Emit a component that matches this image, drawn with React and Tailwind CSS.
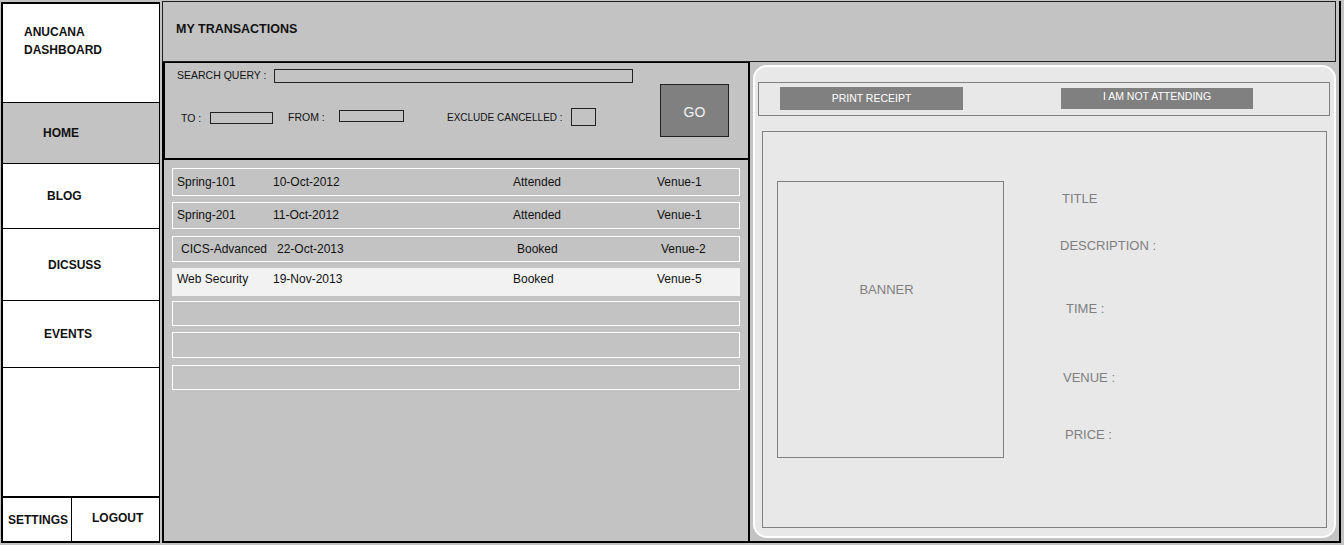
const rows = [
  { name: 'Spring-101', date: '10-Oct-2012', status: 'Attended', venue: 'Venue-1', box: 'mt-0 h-[28px] border border-white pl-[4px]' },
  { name: 'Spring-201', date: '11-Oct-2012', status: 'Attended', venue: 'Venue-1', box: 'mt-[6px] h-[27px] border border-white pl-[4px] pb-[2px]' },
  { name: 'CICS-Advanced', date: '22-Oct-2013', status: 'Booked', venue: 'Venue-2', box: 'mt-[7px] h-[26px] border border-white pl-[8px]' },
  { name: 'Web Security', date: '19-Nov-2013', status: 'Booked', venue: 'Venue-5', box: 'mt-[6px] h-[28px] bg-[#f2f2f2] pl-[5px] pb-[6px]' },
];

const emptyRows = ['mt-[5px] h-[25px]', 'mt-[6px] h-[26px]', 'mt-[7px] h-[25px]'];

function NavItem({ label, className }) {
  return (
    <div className={`flex items-center border-b border-black text-[12px] font-bold text-[#111] ${className}`}>
      {label}
    </div>
  );
}

function Sidebar() {
  return (
    <aside className="mt-[1px] flex w-[159px] flex-col border-l-2 border-t-2 border-r border-black bg-white">
      <div className="h-[99px] border-b border-black pl-[21px] pt-[19px] text-[12px] font-bold leading-[18px] text-[#111]">
        <div>ANUCANA</div>
        <div>DASHBOARD</div>
      </div>
      <NavItem label="HOME" className="h-[61px] bg-[#c3c3c3] pl-[40px]" />
      <NavItem label="BLOG" className="h-[65px] pl-[44px]" />
      <NavItem label="DICSUSS" className="h-[72px] pl-[45px]" />
      <NavItem label="EVENTS" className="h-[67px] pl-[41px]" />
      <div className="flex-1" />
      <div className="flex h-[47px] border-y-2 border-black text-[12px] font-bold text-[#111]">
        <div className="flex w-[69px] items-center border-r border-black pl-[5px] pt-[1px]">SETTINGS</div>
        <div className="flex flex-1 items-center pl-[20px] pb-[4px]">LOGOUT</div>
      </div>
    </aside>
  );
}

function SearchPanel() {
  return (
    <div className="flex h-[98px] border-t border-b-2 border-l border-black text-[10.5px] text-[#111]">
      <div className="flex flex-col pl-[12px] pt-[6px]">
        <div className="flex h-[14px] items-center">
          <span className="w-[97px]">SEARCH QUERY :</span>
          <div className="h-[14px] w-[359px] border border-[#222]" />
        </div>
        <div className="ml-[4px] mt-[25px] flex h-[18px] items-center">
          <span className="w-[29px] translate-y-[2px]">TO :</span>
          <div className="h-[12px] w-[63px] translate-y-[1px] border border-[#222]" />
          <span className="ml-[15px] w-[51px] translate-y-[1px]">FROM :</span>
          <div className="h-[12px] w-[65px] -translate-y-px border border-[#222]" />
          <span className="ml-[43px] w-[124px] text-[10px]">EXCLUDE CANCELLED :</span>
          <div className="h-[18px] w-[25px] border border-[#222]" />
        </div>
      </div>
      <div className="ml-auto mr-[19px] mt-[21px] flex h-[53px] w-[69px] items-center justify-center border border-[#222] bg-[#808080] pt-[3px] text-[14px] text-[#f2f2f2]">
        GO
      </div>
    </div>
  );
}

function TransactionList() {
  return (
    <div className="flex flex-col px-[8px] pt-[8px] text-[12px] text-[#111]">
      {rows.map((r) => (
        <div key={r.name} className={`flex items-center ${r.box}`}>
          <span className="w-[96px]">{r.name}</span>
          <span className="w-[240px]">{r.date}</span>
          <span className="w-[144px]">{r.status}</span>
          <span>{r.venue}</span>
        </div>
      ))}
      {emptyRows.map((c, i) => (
        <div key={i} className={`border border-white ${c}`} />
      ))}
    </div>
  );
}

function DetailPanel() {
  return (
    <div className="flex flex-1 flex-col rounded-[14px] border-2 border-white bg-[#e8e8e8]">
      <div className="ml-[3px] mr-[4px] mt-[15px] flex h-[34px] items-start border border-[#808080] text-[10.5px] text-white">
        <div className="ml-[21px] mt-[4px] flex h-[23px] w-[183px] items-center justify-center bg-[#808080]">
          PRINT RECEIPT
        </div>
        <div className="ml-[98px] mt-[5px] flex h-[21px] w-[192px] items-center justify-center bg-[#808080] pb-[3px]">
          I AM NOT ATTENDING
        </div>
      </div>
      <div className="mx-[7px] mb-[8px] mt-[15px] flex flex-1 items-start border border-[#808080] text-[13px] leading-[16px] text-[#7f7f7f]">
        <div className="ml-[14px] mt-[49px] h-[277px] w-[227px] border border-[#808080] pr-[8px] pt-[100px] text-center">
          BANNER
        </div>
        <div className="ml-[56px] flex flex-col pt-[59px]">
          <span className="ml-[2px]">TITLE</span>
          <span className="mt-[31px]">DESCRIPTION :</span>
          <span className="ml-[6px] mt-[47px]">TIME :</span>
          <span className="ml-[3px] mt-[53px]">VENUE :</span>
          <span className="ml-[5px] mt-[41px]">PRICE :</span>
        </div>
      </div>
    </div>
  );
}

export default function App() {
  return (
    <div className="flex h-[545px] w-[1344px] bg-[#c3c3c3] pb-[2px] pl-[1px] pr-[3px] pt-[1px] font-['Liberation_Sans',Arial,sans-serif]">
      <Sidebar />
      <main className="ml-[2px] flex flex-1 flex-col border-b-2 border-r-2 border-black">
        <header className="mr-[3px] h-[61px] border border-[#1e1e1e] pl-[13px] pt-[19px] text-[12.5px] font-bold leading-[16px] text-[#111]">
          MY TRANSACTIONS
        </header>
        <div className="flex min-h-0 flex-1">
          <section className="flex w-[588px] flex-col border-x-2 border-black">
            <SearchPanel />
            <TransactionList />
          </section>
          <div className="flex flex-1 px-[3px] pb-[3px] pt-[3px]">
            <DetailPanel />
          </div>
        </div>
      </main>
    </div>
  );
}
